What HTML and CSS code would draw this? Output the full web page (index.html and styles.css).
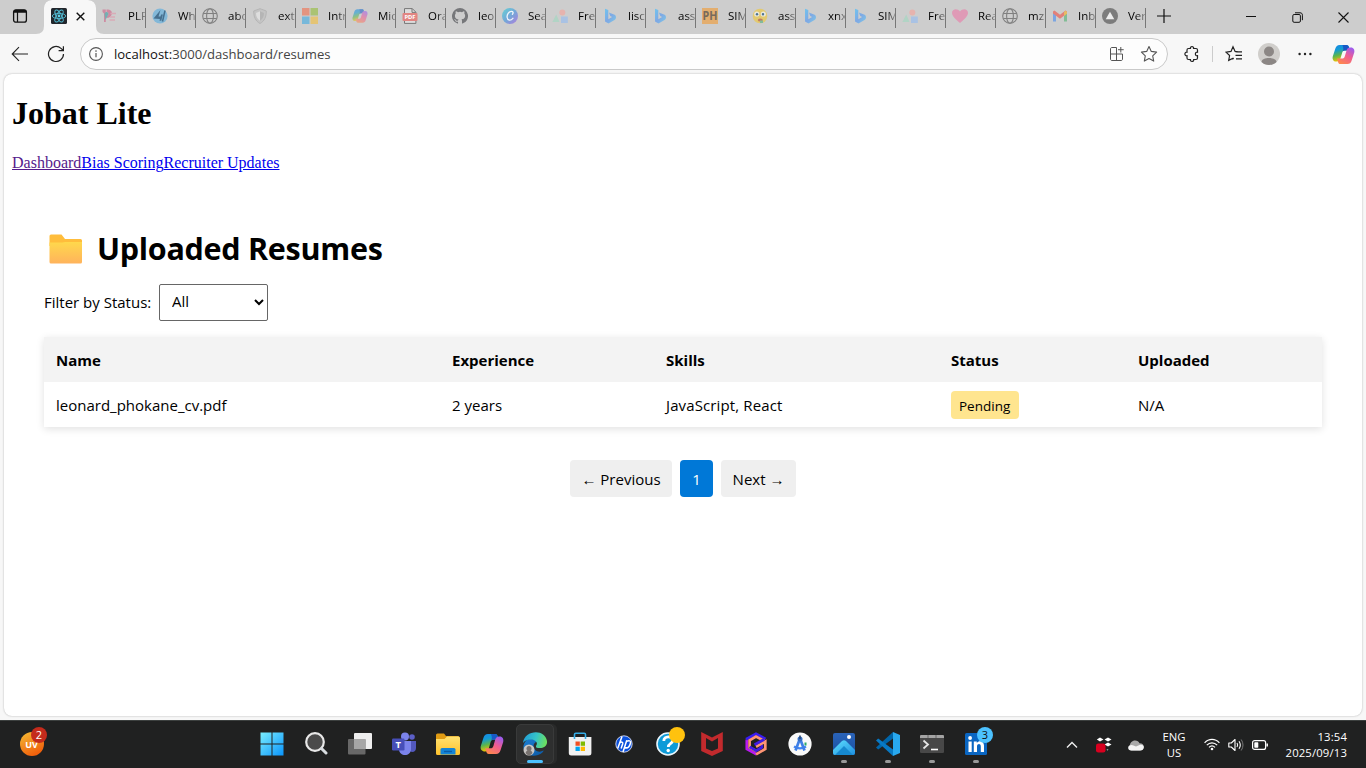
FILE: index.html
```html
<!DOCTYPE html>
<html lang="en">
<head>
<meta charset="utf-8">
<title>Jobat Lite</title>
<link rel="stylesheet" href="styles.css">
</head>
<body>
<svg class="sprite" aria-hidden="true">
  <defs>
    <linearGradient id="gBing" x1="0" y1="0" x2="1" y2="1"><stop offset="0" stop-color="#6fc4ee"/><stop offset=".5" stop-color="#7fa8e4"/><stop offset="1" stop-color="#7ccbe8"/></linearGradient>
    <linearGradient id="gCopA" x1="0" y1="0" x2=".3" y2="1"><stop offset="0" stop-color="#1785e8"/><stop offset=".35" stop-color="#139bd4"/><stop offset=".65" stop-color="#5bb54c"/><stop offset="1" stop-color="#f5c400"/></linearGradient>
    <linearGradient id="gCopB" x1=".8" y1="0" x2=".2" y2="1"><stop offset="0" stop-color="#9b5cf0"/><stop offset=".45" stop-color="#ef5c92"/><stop offset="1" stop-color="#ff8a4a"/></linearGradient>
    <linearGradient id="gCanva" x1="0" y1="0" x2="1" y2="1"><stop offset="0" stop-color="#65d1d4"/><stop offset=".5" stop-color="#73a8d8"/><stop offset="1" stop-color="#b07ddd"/></linearGradient>
    <linearGradient id="gFolder" x1="0" y1="0" x2="0" y2="1"><stop offset="0" stop-color="#ffd84c"/><stop offset="1" stop-color="#ffb35c"/></linearGradient>
    <linearGradient id="gWin" x1="0" y1="0" x2="1" y2="1"><stop offset="0" stop-color="#7aeeff"/><stop offset="1" stop-color="#0a94fb"/></linearGradient>
    <linearGradient id="gUv" x1="0" y1="0" x2=".5" y2="1"><stop offset="0" stop-color="#f4bd34"/><stop offset="1" stop-color="#f0600c"/></linearGradient>
    <linearGradient id="gExp" x1="0" y1="0" x2="0" y2="1"><stop offset="0" stop-color="#ffe272"/><stop offset="1" stop-color="#ffc22c"/></linearGradient>
    <linearGradient id="gEdge" x1="0" y1=".2" x2="1" y2=".4"><stop offset="0" stop-color="#209bd8"/><stop offset=".55" stop-color="#35c4c8"/><stop offset="1" stop-color="#6be060"/></linearGradient>
    <linearGradient id="gEdge2" x1="0" y1="0" x2="1" y2="1"><stop offset="0" stop-color="#1b7fd4"/><stop offset="1" stop-color="#0c59a4"/></linearGradient>
    <linearGradient id="gPhoto" x1="0" y1="0" x2="0" y2="1"><stop offset="0" stop-color="#2a63b8"/><stop offset="1" stop-color="#1a4fa0"/></linearGradient>
    <linearGradient id="gPhoto2" x1="0" y1="0" x2="1" y2="1"><stop offset="0" stop-color="#5fe0ff"/><stop offset="1" stop-color="#1e8fe0"/></linearGradient>
  </defs>
  <symbol id="bing" viewBox="0 0 16 16"><path d="M3 .8 6.300 2v9.200l3.800-2.100-1.900-1-1.300-3.500 5.100 1.900c1.700.7 2 1.600 2 2.800 0 1.400-.7 2.300-1.900 3L6.500 15.600 3 13.500z" fill="url(#gBing)"/></symbol>
  <symbol id="globe" viewBox="0 0 16 16"><g fill="none" stroke="#808080" stroke-width="1.100"><circle cx="8" cy="8" r="7.300"/><ellipse cx="8" cy="8" rx="3.400" ry="7.300"/><path d="M1.300 5.500h13.400M1.300 10.500h13.400"/></g></symbol>
  <symbol id="shapes" viewBox="0 0 16 16"><path d="M.3 14 4.300 6.500 7.500 14z" fill="#b1d4c5"/><circle cx="10.300" cy="4.500" r="3" fill="#e6b3ae"/><rect x="9" y="8.500" width="6.800" height="6.500" fill="#a9c2e4"/></symbol>
  <symbol id="copilot" viewBox="0 0 24 24"><path d="M8 2h7.200c1.300 0 2 .8 2.400 2l1.200 3.700h-5c-2 0-2.700.8-3.200 2.400l-1.700 5.900c-.7 2.200-1.600 3.400-4 3.400H4.200C1.500 19.400.1 16.900.8 14.100L3.400 6C4.200 3.300 5.500 2 8 2z" fill="url(#gCopA)"/><path d="M11 2h4.200c1.300 0 2 .8 2.400 2l1.200 3.700h-5c-1.300 0-2.100.3-2.600 1.100C12.500 6 11.500 4 11 2z" fill="#1759c6"/><path d="M16 22H8.800c-1.300 0-2-.8-2.400-2l-1.200-3.700h5c2 0 2.700-.8 3.200-2.400l1.700-5.900c.7-2.200 1.600-3.400 4-3.400h.7c2.700 0 4.100 2.500 3.400 5.300L20.600 18c-.8 2.700-2.100 4-4.600 4z" fill="url(#gCopB)"/></symbol>
  <symbol id="star" viewBox="0 0 18 18"><path d="m9 1.500 2.300 4.900 5.300.7-3.900 3.700 1 5.300L9 13.500l-4.700 2.600 1-5.300-3.900-3.700 5.300-.7z" fill="none" stroke="currentColor" stroke-width="1.100" stroke-linejoin="round"/></symbol>
</svg>

<div class="window">
  <header class="tabstrip">
    <div class="tab-actions"><svg width="16" height="16" viewBox="0 0 16 16"><rect x="1.600" y="1.800" width="12.800" height="12.400" rx="2.300" fill="none" stroke="#111" stroke-width="1.300"/><path d="M1.600 4.700V4c0-1.500.8-2.200 2.300-2.200h8.200c1.500 0 2.300.7 2.300 2.200v.7z" fill="#111"/><path d="M5.500 4v10" stroke="#111" stroke-width="1.200"/></svg></div>
    <div class="tab-active">
      <svg width="16" height="16" viewBox="0 0 16 16"><rect width="16" height="16" rx="1.500" fill="#22272d"/><g fill="none" stroke="#52bdd5" stroke-width=".9"><ellipse cx="8" cy="8" rx="6.700" ry="2.600"/><ellipse cx="8" cy="8" rx="6.700" ry="2.600" transform="rotate(60 8 8)"/><ellipse cx="8" cy="8" rx="6.700" ry="2.600" transform="rotate(120 8 8)"/></g><circle cx="8" cy="8" r="1.400" fill="#5ed0e8"/></svg>
      <svg width="9" height="9" viewBox="0 0 9 9"><path d="m.7.700 7.600 7.600M8.300.7.700 8.300" stroke="#111" stroke-width="1.400"/></svg>
    </div>
    <div class="tab"><svg viewBox="0 0 16 16"><path d="M.5 1.500h3.300v12.500H2V5.500L.5 4zM4.500 1.500c4.500 0 6 2 5.200 5-.8 2.500-2.700 3.500-5.200 3.500V8c2.500-.5 2.500-4 0-4z" fill="#cf8ca2"/><path d="M2.500 6c1-3 4-2 4 0L3.500 12z" fill="#76aeb1"/><path d="M8.500 5.500H14M8 9h5M7.500 12H13" stroke="#d9abb7" stroke-width="1.300"/></svg><span>PLF</span></div>
    <div class="tab"><svg viewBox="0 0 16 16"><circle cx="8" cy="8" r="7.600" fill="#83b8d8"/><path d="M1.500 10.500 8.500 2 6.500 8.500h2l.6-2h1.800l-1.600 6.300H7.500l.4-1.700z" fill="#47708f"/><path d="M13 2.500 10.500 13.500" stroke="#47708f" stroke-width="1.500"/></svg><span>Wh</span></div>
    <div class="tab"><svg><use href="#globe"/></svg><span>abo</span></div>
    <div class="tab"><svg viewBox="0 0 16 16"><path d="M8 .7 14.300 3c0 6-1.800 10-6.300 12.500C3.500 13 1.700 9 1.700 3z" fill="#c4c4c4" stroke="#b5b5b5"/><path d="M8 3.300 12 5c0 3.600-1.300 6-4 7.700z" fill="#b5b5b5"/><path d="M8 3.300 4 5c0 3.600 1.300 6 4 7.700z" fill="#dedede"/></svg><span>ext</span></div>
    <div class="tab"><svg viewBox="0 0 16 16"><path d="M0 0h7.500v7.500H0z" fill="#e39480"/><path d="M8.500 0H16v7.500H8.500z" fill="#aac373"/><path d="M0 8.500h7.500V16H0z" fill="#77b8da"/><path d="M8.500 8.500H16V16H8.500z" fill="#e4c475"/></svg><span>Intr</span></div>
    <div class="tab"><svg class="faded" viewBox="0 0 24 24"><use href="#copilot"/></svg><span>Mic</span></div>
    <div class="tab"><svg viewBox="0 0 16 16"><path d="M2.500.6h7.800l3.600 3.600v11.200H2.500z" fill="#ddd" stroke="#777"/><path d="M10 .6v3.800h3.800" fill="none" stroke="#777"/><rect x=".5" y="5" width="15" height="8" rx="1" fill="#e28582"/><text x="8" y="11.200" font-size="5.800" font-weight="700" fill="#fff" text-anchor="middle">PDF</text></svg><span>Ora</span></div>
    <div class="tab"><svg viewBox="0 0 16 16"><path fill="#76777a" d="M8 0a8 8 0 0 0-2.530 15.590c.4.070.55-.17.550-.38v-1.490c-2.230.490-2.700-.94-2.700-.94-.36-.92-.89-1.170-.89-1.170-.73-.5.060-.49.060-.49.800.060 1.230.830 1.230.830.710 1.220 1.870.870 2.330.660.070-.52.280-.87.510-1.070-1.780-.2-3.640-.89-3.640-3.950 0-.87.310-1.590.820-2.150-.08-.2-.36-1.020.080-2.120 0 0 .670-.210 2.200.820a7.600 7.600 0 0 1 4 0c1.530-1.040 2.200-.820 2.200-.820.440 1.100.160 1.920.080 2.120.510.560.820 1.270.820 2.150 0 3.070-1.870 3.750-3.650 3.950.290.250.540.730.540 1.480v2.190c0 .210.150.460.550.380A8 8 0 0 0 8 0z"/></svg><span>leo</span></div>
    <div class="tab"><svg viewBox="0 0 16 16"><circle cx="8" cy="8" r="8" fill="url(#gCanva)"/><path d="M10.400 6.200c1.200-1.200.8-3-1.100-2.900-2.500.2-4.500 3.300-4.200 6 .3 3.300 3.500 3.900 5.800 1" fill="none" stroke="#f0f5fb" stroke-width="1.300" stroke-linecap="round"/></svg><span>Sea</span></div>
    <div class="tab"><svg><use href="#shapes"/></svg><span>Fre</span></div>
    <div class="tab"><svg><use href="#bing"/></svg><span>lisc</span></div>
    <div class="tab"><svg><use href="#bing"/></svg><span>ass</span></div>
    <div class="tab"><svg viewBox="0 0 16 16"><rect width="16" height="16" fill="#e3ae6f"/><text x="8" y="12.300" font-size="11.500" font-weight="700" fill="#776a5c" text-anchor="middle" textLength="15" lengthAdjust="spacingAndGlyphs">PH</text></svg><span>SIM</span></div>
    <div class="tab"><svg viewBox="0 0 16 16"><circle cx="8" cy="8" r="7.300" fill="#e3ca70"/><circle cx="4.800" cy="6" r="2.600" fill="#e8e8df"/><circle cx="11.300" cy="6" r="2.600" fill="#e8e8df"/><circle cx="5" cy="6.300" r="1.200" fill="#4d7391"/><circle cx="11" cy="6.300" r="1.200" fill="#4d7391"/><ellipse cx="8.300" cy="12" rx="2.500" ry="1.500" fill="#bd7c62"/><path d="M8 12.500h3V15H8z" fill="#83bb9b"/></svg><span>ass</span></div>
    <div class="tab"><svg><use href="#bing"/></svg><span>xnx</span></div>
    <div class="tab"><svg><use href="#bing"/></svg><span>SIM</span></div>
    <div class="tab"><svg><use href="#shapes"/></svg><span>Fre</span></div>
    <div class="tab"><svg viewBox="0 0 16 16"><path d="M8 15C3 10.800 0 8 0 4.800 0 .8 5.500-.2 8 3.500 10.500-.2 16 .8 16 4.800 16 8 13 10.800 8 15z" fill="#df9ab6"/></svg><span>Rea</span></div>
    <div class="tab"><svg><use href="#globe"/></svg><span>mz</span></div>
    <div class="tab"><svg viewBox="0 0 16 16"><path d="M1 4v9.500h3V6z" fill="#7ba5e2"/><path d="M15 4v9.500h-3V6z" fill="#82bd96"/><path d="M1 3.500 2.500 2.500 8 6.700l5.500-4.200L15 3.500v2L8 10.800 1 5.500z" fill="#e28079"/><path d="M12 4.200 13.500 2.500 15 4v1.700l-3 2.200z" fill="#e6bd62"/></svg><span>Inb</span></div>
    <div class="tab"><svg viewBox="0 0 16 16"><circle cx="8" cy="8" r="8" fill="#7c7c7c"/><path d="m8 3.800 4.300 7.400H3.700z" fill="#ececec"/></svg><span>Ver</span></div>
    <div class="new-tab"><svg width="14" height="14" viewBox="0 0 14 14"><path d="M7 0v14M0 7h14" stroke="#111" stroke-width="1.200"/></svg></div>
    <div class="window-controls">
      <div><svg width="10" height="10" viewBox="0 0 10 10"><path d="M0 4.500h10" stroke="#111"/></svg></div>
      <div><svg width="11" height="11" viewBox="0 0 11 11"><g fill="none" stroke="#111"><rect x=".8" y="2.500" width="7.600" height="7.800" rx="1.300"/><path d="M3 .8h5c1.600 0 2.400.8 2.400 2.400v5"/></g></svg></div>
      <div><svg width="11" height="11" viewBox="0 0 11 11"><path d="m.5.500 10 10M10.500.5.500 10.500" stroke="#111" stroke-width="1.100"/></svg></div>
    </div>
  </header>

  <div class="toolbar">
    <div class="nav-icon"><svg width="18" height="16" viewBox="0 0 18 16"><path d="M17 8H1.500M8 1.200 1.200 8 8 14.800" fill="none" stroke="#222" stroke-width="1.100"/></svg></div>
    <div class="nav-icon"><svg width="18" height="18" viewBox="0 0 18 18"><path d="M16.500 9A7.500 7.500 0 1 1 14 3.400l2.200 2M16.400 1.200v4.500h-4.800" fill="none" stroke="#222" stroke-width="1.200"/></svg></div>
    <div class="address">
      <svg width="14" height="14" viewBox="0 0 14 14"><circle cx="7" cy="7" r="6.400" fill="none" stroke="#555" stroke-width="1.100"/><path d="M7 6v4.200" stroke="#555" stroke-width="1.200"/><circle cx="7" cy="4.100" r=".8" fill="#555"/></svg>
      <span class="url"><b>localhost:</b>3000/dashboard/resumes</span>
      <svg class="apps" width="14" height="14" viewBox="0 0 14 14"><path d="M6.500.5H2C1 .5.500 1 .500 2v10c0 1 .5 1.500 1.500 1.500h9c1 0 1.500-.5 1.500-1.500V7M.5 7h12M6.500.5v13M10.800 0v5.500M8 2.700h5.700" fill="none" stroke="#555"/></svg>
      <svg class="fav" width="18" height="18"><use href="#star"/></svg>
    </div>
    <div class="tools">
      <svg class="extensions" width="16" height="16" viewBox="0 0 16 16"><path d="M4.500 2.500h1.900C6 1.200 7 .6 8 .6s2 .7 1.600 1.900H12c1 0 1.500.5 1.500 1.500v2.200c-1.600-.3-2.100.8-2.100 1.800s.6 2 2.100 1.700V12c0 1-.5 1.500-1.500 1.500H9.700c.3 1.300-.7 1.900-1.700 1.900s-2-.6-1.600-1.900H4.500c-1 0-1.500-.5-1.500-1.500V9.700C1.700 10 .9 9 .9 8s.8-2 2.100-1.800V4c0-1 .5-1.500 1.500-1.500z" fill="none" stroke="#222" stroke-width="1.200"/></svg>
      <i class="divider"></i>
      <svg class="favorites" width="18" height="18" viewBox="0 0 18 18"><path d="M8.600 14 8 13.300l-4.300 2.100.9-4.900L1 7.100l5-.7 2-4.700 2.100 4.700 2.400.3M10.500 6.800H17M10.500 10.300H17M11 13.800h6" fill="none" stroke="#222" stroke-width="1.200"/></svg>
      <svg class="avatar" width="22" height="22" viewBox="0 0 22 22"><circle cx="11" cy="11" r="11" fill="#d0cecb"/><circle cx="11" cy="8.500" r="5" fill="#8c8785"/><path d="M3.500 19c0-5.500 15-5.500 15 0-4 4-11 4-15 0z" fill="#8c8785"/></svg>
      <svg class="more" width="14" height="4" viewBox="0 0 14 4"><g fill="#222"><circle cx="1.600" cy="2" r="1.200"/><circle cx="7" cy="2" r="1.200"/><circle cx="12.400" cy="2" r="1.200"/></g></svg>
      <svg class="copilot" width="23" height="23"><use href="#copilot"/></svg>
    </div>
  </div>

  <main class="page">
    <h1 class="brand">Jobat Lite</h1>
    <nav class="links"><a class="visited" href="#">Dashboard</a><a href="#">Bias Scoring</a><a href="#">Recruiter Updates</a></nav>
    <section class="resumes">
      <h2 class="title"><svg width="34" height="30" viewBox="0 0 34 30"><path d="M.5 2Q.5.500 2 .500h10.500L16 5h15.500q1.500 0 1.500 1.500V12H.5z" fill="#ffbd3c"/><path d="M.5 8.500h13L16 8h17v20q0 1.500-1.500 1.500H2Q.5 29.500.500 28z" fill="url(#gFolder)"/></svg><span>Uploaded Resumes</span></h2>
      <div class="filter"><label for="status">Filter by Status:</label><select id="status"><option>All</option><option>Pending</option></select></div>
      <table class="table">
        <colgroup><col class="c-name"><col class="c-exp"><col class="c-skills"><col class="c-status"><col></colgroup>
        <thead><tr><th>Name</th><th>Experience</th><th>Skills</th><th>Status</th><th>Uploaded</th></tr></thead>
        <tbody><tr><td>leonard_phokane_cv.pdf</td><td>2 years</td><td class="skills">JavaScript, React</td><td><span class="badge">Pending</span></td><td>N/A</td></tr></tbody>
      </table>
      <div class="pager"><button class="prev">← Previous</button><button class="current">1</button><button class="next">Next →</button></div>
    </section>
  </main>
</div>

<footer class="taskbar">
  <div class="widget"><svg width="28" height="30" viewBox="0 0 28 30"><circle cx="12" cy="17" r="12" fill="url(#gUv)"/><text x="11.500" y="20.500" font-size="9" font-weight="700" fill="#fff" text-anchor="middle">UV</text><circle cx="19" cy="8" r="8" fill="#c42b1c"/><text x="19" y="12" font-size="11" fill="#fff" text-anchor="middle">2</text></svg></div>
  <div class="apps-row">
    <div class="app"><svg viewBox="0 0 24 24"><path d="M.5.5H11.500v11H.5zM12.500.5h11v11h-11zM.5 12.500h11v11H.5zM12.500 12.500h11v11h-11z" fill="url(#gWin)"/></svg></div>
    <div class="app"><svg viewBox="0 0 24 24"><circle cx="11" cy="10" r="8.800" fill="#4a4a4a" stroke="#e8e8e8" stroke-width="2.200"/><path d="m17.500 16.500 4.500 4.500" stroke="#d8dce0" stroke-width="3" stroke-linecap="round"/></svg></div>
    <div class="app"><svg viewBox="0 0 24 24"><rect x="6" y="1" width="18" height="16" rx="1" fill="#eee"/><rect x="0" y="7" width="17.500" height="15.500" rx="1" fill="#686868"/><path d="M6 7h11.500v10H6z" fill="#a6a6a6"/></svg></div>
    <div class="app"><svg viewBox="0 0 24 24"><circle cx="20" cy="5" r="2.800" fill="#5b5fc7"/><path d="M16 9h8v7c0 4-4 5-6 3z" fill="#5258bd"/><circle cx="13" cy="4.500" r="4" fill="#7b83eb"/><path d="M7 9h12v8c0 8-12 8-12 0z" fill="#7b83eb"/><rect x="0" y="6.500" width="12.500" height="12" rx="1.200" fill="#464eb8"/><text x="6.200" y="16" font-size="9.500" font-weight="700" fill="#fff" text-anchor="middle">T</text></svg></div>
    <div class="app"><svg viewBox="0 0 24 24"><path d="M0 3q0-1.500 1.500-1.500H8L10 4h12q1.500 0 1.500 1.500V12H0z" fill="#e09b13"/><path d="M0 7h8.500L11 4.500h11.500Q24 4.500 24 6v15.500q0 1.500-1.500 1.500h-21Q0 23 0 21.500z" fill="url(#gExp)"/><path d="M4.500 22.500v-5q0-1.500 1.500-1.500h12q1.500 0 1.500 1.500v5z" fill="#1384d6"/><path d="M8 19.500h8" stroke="#0a5ca8" stroke-width="1.400"/></svg></div>
    <div class="app"><svg><use href="#copilot"/></svg></div>
    <div class="app active"><svg viewBox="0 0 24 24"><path d="M1 12c-3 8 6 14 14 11 4-1.500 6-4 5.500-4.500-5 3-10-.5-10-4 0-3 1.500-4 3.500-5C9 5 2.500 7 1 12z" fill="url(#gEdge2)"/><path d="M0 11C1-2 22-4 24 9c.5 5-3 7-7 7-4.500 0-4.500-1.500-3.500-3 1.500-3-1.500-5.500-6-5.500C4 7.500 1.500 9 0 11z" fill="url(#gEdge)"/><circle cx="6" cy="18" r="5.500" fill="#c9c7c5"/><circle cx="6" cy="16.500" r="2.500" fill="#77716e"/><path d="M2.500 21c1-4 6-4 7 0-2 3-5 3-7 0z" fill="#77716e"/></svg><i class="mark"></i></div>
    <div class="app"><svg viewBox="0 0 24 24"><path d="M.8 5h22.600v16q0 2.500-2.500 2.500H3.300Q.8 23.500.8 21z" fill="#f1f1f1"/><path d="M6.500 7V2.500q0-1.300 1.300-1.300h8.400q1.300 0 1.300 1.300V7" fill="none" stroke="#36aee8" stroke-width="1.600"/><path d="M7.500 9.500h4.300v4.300H7.500z" fill="#f25022"/><path d="M12.700 9.500H17v4.300h-4.300z" fill="#7fba00"/><path d="M7.500 14.700h4.300V19H7.500z" fill="#00a4ef"/><path d="M12.700 14.700H17V19h-4.300z" fill="#ffb900"/></svg></div>
    <div class="app"><svg viewBox="0 0 24 24"><circle cx="12" cy="12" r="8.200" fill="#0a50dc" stroke="#eef" stroke-width=".8"/><path d="m10 4.500-4.300 12M7.700 11c2-1.500 3.500-1 3 .8l-1.600 4.700M14.800 8.200 11 20M14.500 9.200c3.500-1.200 4.600-.2 3.800 2.500-1 3.500-2.300 4.800-5.300 4" fill="none" stroke="#fff" stroke-width="1.500"/></svg></div>
    <div class="app"><svg viewBox="0 0 24 24"><circle cx="12" cy="12" r="11" fill="#0e9bd8" stroke="#e9f5fb" stroke-width="1.600"/><path d="M7.800 9c0-5.500 8.800-5.500 8.800-.6 0 3.300-4.300 3.200-4.300 6.500" fill="none" stroke="#fff" stroke-width="2.800"/><circle cx="12.200" cy="18.500" r="1.700" fill="#fff"/></svg><i class="yellow-dot"></i></div>
    <div class="app"><svg viewBox="0 0 24 24"><path d="M1.200 0 12 5.500 22.800 0v19L12 24 1.200 19zM6 6v10.500l6 2.500 6-2.500V6l-6 3.500z" fill="#c22a2d" fill-rule="evenodd"/></svg></div>
    <div class="app"><svg viewBox="0 0 24 24"><g fill="none" stroke-width="2.700"><path d="M2.800 7.500V17l9.700 5.300" stroke="#ba19f0"/><path d="M2 7.300 12 1.700l9.500 5.200" stroke="#3a1cf0"/><path d="M20 8.800 12 4.600 5.600 8.200v7.300l6.700 3.600" stroke="#ff9575"/><path d="M5.600 14.800l6.600 3.800 5.600-3.200v-3" stroke="#421be5"/><path d="M12 22.300 21.300 17v-7.500L12 14.700" stroke="#ff9575"/><path d="m10.500 12.700 9.500-5.200" stroke="#421be5"/></g></svg></div>
    <div class="app"><svg viewBox="0 0 24 24"><circle cx="12" cy="12" r="11.600" fill="#fafafa"/><path d="M6 14.500c4 2.500 8 2.500 12 0" fill="none" stroke="#4285f4" stroke-width="2.300"/><path d="M12 6.500 7.500 18.500M12 6.500l4.500 12" stroke="#3f7fe5" stroke-width="2.700"/><path d="M16.500 10.500h2v3h-2z" fill="#2ba96a"/><circle cx="12" cy="7" r="2.500" fill="#356fc4"/><path d="M12 3.500V7" stroke="#274572" stroke-width="1.600"/></svg></div>
    <div class="app"><svg viewBox="0 0 24 24"><rect x="1" y="1" width="22" height="22" rx="2" fill="url(#gPhoto)"/><path d="M1 18 10 9q2-1.500 4 0l9 9v3q0 2-2 2H3q-2 0-2-2z" fill="url(#gPhoto2)"/><path d="m3 23 9-9 9 9z" fill="#1689cf"/><circle cx="17" cy="5" r="2" fill="#fff"/></svg><i class="dot"></i></div>
    <div class="app"><svg viewBox="0 0 24 24"><path d="M17 0v6.500L2.200 17.500 0 15.500z" fill="#0065a9"/><path d="M17 24v-6.500L2.200 6.500 0 8.500z" fill="#0879c4"/><path d="m17 0 7 3v18l-7 3z" fill="#28a8ee"/></svg><i class="dot"></i></div>
    <div class="app"><svg viewBox="0 0 24 24"><rect x="0" y="3" width="24" height="18" rx="1.300" fill="#484848"/><path d="M0 6V4.300Q0 3 1.300 3h21.400Q24 3 24 4.300V6z" fill="#a4a4a4"/><path d="M8 3v3m8-3v3" stroke="#666"/><path d="m3.500 8.500 4.500 4-4.500 4" fill="none" stroke="#e5e5e5" stroke-width="1.800"/><path d="M11 17.500h7" stroke="#fff" stroke-width="1.600"/></svg><i class="dot"></i></div>
    <div class="app"><svg viewBox="0 0 24 24"><rect x="1" y="1" width="22" height="22" rx="1.500" fill="#0a66c2"/><path d="M4.500 9.500h3.200V20H4.500zM9.800 9.500h3V11c1.800-3 7.200-2.500 7.200 2.600V20h-3.200v-5.500c0-3.400-3.800-3-3.800 0V20H9.800z" fill="#fff"/><circle cx="6.100" cy="6" r="1.900" fill="#fff"/></svg><i class="count">3</i><i class="dot"></i></div>
  </div>
  <div class="tray">
    <svg class="chev" width="12" height="8" viewBox="0 0 12 8"><path d="m1 6.500 5-5 5 5" fill="none" stroke="#eee" stroke-width="1.400"/></svg>
    <svg class="drop" width="16" height="16" viewBox="0 0 16 16"><path d="m4 .5 3.500 2L4 4.500.800 2.500zM12 .5l3.500 2-3.500 2-3.500-2zM12 5.500l3.500 2-3.500 2-3.500-2z" fill="#fff"/><rect x="0" y="6.500" width="9.500" height="9" rx="2.300" fill="#d8001f"/><path d="M10.500 12.500h2l-1 1z" fill="#fff"/></svg>
    <svg class="cloud" width="16" height="12" viewBox="0 0 16 12"><path d="M2 8.500C1 4 4.500 1.500 7 1.500s3.500 1 4.500 2.700c3 0 4.300 1.600 4.300 3.600 0 2.300-1.500 3.700-3.800 3.700H3.500C1.500 11.500.300 10.500.300 9.200Q.3 7 2 6z" fill="#a9a9a9"/><path d="M.3 8.500c0-2 3-3.300 5.200-2l2.500 1 3.500-1.600c2.500-.8 4.300.3 4.300 2.300s-1.600 3.300-3.800 3.300H3.500c-2 0-3.200-1-3.200-3z" fill="#f4f4f4"/></svg>
    <div class="lang">ENG<br>US</div>
    <svg class="wifi" width="16" height="13" viewBox="0 0 16 13"><g fill="none" stroke="#fff" stroke-width="1.200"><path d="M.6 4.800c4.200-4.600 10.600-4.600 14.800 0M2.800 7.200c3-3.200 7.400-3.200 10.400 0M5 9.400c1.800-1.800 4.200-1.800 6 0"/></g><circle cx="8" cy="11" r="1.300" fill="#fff"/></svg>
    <svg class="volume" width="16" height="14" viewBox="0 0 16 14"><path d="M.8 5h2.500L7 1.500v11L3.300 9H.8z" fill="none" stroke="#fff" stroke-width="1.100" stroke-linejoin="round"/><path d="M9 5q1.300 2 0 4M11 3.200q2.600 3.800 0 7.600" fill="none" stroke="#fff" stroke-width="1.100"/><path d="M13.200 1.500q3.600 5.500 0 11" fill="none" stroke="#777"/></svg>
    <svg class="battery" width="16" height="10" viewBox="0 0 16 10"><rect x=".6" y=".6" width="13" height="8.800" rx="2" fill="none" stroke="#fff" stroke-width="1.200"/><rect x="2.300" y="2.300" width="4" height="5.400" rx=".7" fill="#fff"/><path d="M15.200 3.500v3" stroke="#fff" stroke-width="1.500"/></svg>
    <div class="clock">13:54<br>2025/09/13</div>
  </div>
</footer>
</body>
</html>
```
FILE: styles.css
```css
* { box-sizing: border-box; }
body {
  margin: 0;
  width: 1366px;
  height: 768px;
  overflow: hidden;
  display: flex;
  flex-direction: column;
  background: #f7f7f7;
  font-family: "Open Sans", "Noto Sans", sans-serif;
  color: #000;
}
svg { display: block; flex: none; }
.sprite { position: absolute; width: 0; height: 0; }
.window { height: 720px; display: flex; flex-direction: column; }

/* Tab strip */
.tabstrip { height: 34px; display: flex; background: #cdcdcd; }
.tab-actions { width: 44px; padding: 8px 0 0 12px; }
.tab-active {
  width: 52px;
  display: flex;
  padding: 8px 0 0 7px;
  gap: 9px;
  background: #f7f7f7;
  border-radius: 8px 8px 0 0;
  box-shadow: -8px 8px 0 #f7f7f7, 8px 8px 0 #f7f7f7;
  clip-path: path("M-8 34Q0 34 0 26V8Q0 0 8 0H44Q52 0 52 8V26Q52 34 60 34Z");
}
.tab-active svg:last-child { margin-top: 4px; }
.tab { width: 50px; height: 34px; display: flex; padding: 8px 0 0 6px; }
.tab svg { width: 16px; height: 16px; }
.tab span {
  width: 17px;
  margin-left: 10px;
  overflow: hidden;
  white-space: nowrap;
  font-size: 11.500px;
  line-height: 16px;
  mask-image: linear-gradient(90deg, #000 45%, rgba(0, 0, 0, .3));
}
.tab::after { content: ""; width: 1px; height: 20px; background: #777; }
.faded { opacity: .55; }
.new-tab { padding: 9px 0 0 11px; }
.window-controls { margin-left: auto; display: flex; }
.window-controls div { width: 46px; display: flex; align-items: center; justify-content: center; }

/* Toolbar */
.toolbar { height: 40px; display: flex; align-items: center; padding: 0 11px 0 2px; }
.nav-icon { width: 36px; display: flex; justify-content: center; }
.address {
  width: 1089px;
  height: 32px;
  margin-left: 6px;
  padding: 0 9px 0 8px;
  display: flex;
  align-items: center;
  background: #fdfdfd;
  border: 1px solid #c9c9c9;
  border-radius: 16px;
}
.url { flex: 1; margin-left: 11px; font-size: 13.100px; color: #444; }
.url b { font-weight: 400; color: #111; }
.apps { margin-right: 16px; }
.fav { color: #555; }
.tools { flex: 1; display: flex; align-items: center; margin-left: 16px; }
.divider { width: 1px; height: 16px; margin-left: 12px; background: #ccc; }
.favorites { margin-left: 12px; }
.avatar { margin-left: 15px; }
.more { margin-left: 18px; }
.copilot { margin-left: 20px; }

/* Page */
.page {
  width: 1358px;
  height: 642px;
  margin-left: 4px;
  padding: 0 8px;
  display: flow-root;
  background: #fff;
  border-radius: 8px;
  box-shadow: 0 0 2px rgba(0, 0, 0, .3);
}
.brand { margin: 21px 0 22px; font: 700 32px/37px "Liberation Serif", serif; }
.links { font: 16px/18px "Liberation Serif", serif; }
.links a { color: #0000ee; text-decoration: underline; }
.links .visited { color: #551a8b; }
.resumes { padding: 54px 32px 0; }
.title { display: flex; align-items: center; height: 43px; margin: 0; padding-left: 5px; font-size: 30.500px; font-weight: 700; letter-spacing: -.28px; }
.title span { margin-left: 14px; white-space: nowrap; }
.title svg { margin-top: 3px; }
.filter { height: 37px; margin-top: 15px; display: flex; align-items: center; font-size: 15px; }
.filter label { width: 115px; padding-bottom: 2px; white-space: nowrap; }
.filter select {
  width: 109px;
  height: 37px;
  padding: 5px 8px 8px;
  border: 1px solid #666;
  border-radius: 2px;
  background: #fff;
  color: #000;
  font: 15px "Open Sans", sans-serif;
}
.table {
  width: 1278px;
  margin-top: 16px;
  table-layout: fixed;
  border-collapse: collapse;
  font-size: 15px;
  box-shadow: 0 2px 8px rgba(0, 0, 0, .12);
}
.c-name { width: 396px; }
.c-exp { width: 214px; }
.c-skills { width: 285px; }
.c-status { width: 187px; }
.table th, .table td { height: 45px; padding: 2px 12px 0; text-align: left; line-height: 21px; }
.table th { background: #f3f3f3; }
.skills { letter-spacing: .12px; }
.badge { display: block; width: 68px; height: 28px; margin-bottom: 1px; padding: 4px 8px; border-radius: 4px; background: #ffe58f; font-size: 13.500px; line-height: 22px; }
.pager { display: flex; justify-content: center; gap: 8px; margin-top: 33px; }
.pager button {
  height: 37px;
  padding: 0;
  border: 0;
  border-radius: 4px;
  background: #efefef;
  font: 15px "Open Sans", sans-serif;
  color: #000;
}
.pager .prev { width: 102px; }
.pager .next { width: 75px; }
.pager .current { width: 33px; background: #0078d7; color: #fff; }

/* Taskbar */
.taskbar { height: 48px; display: flex; background: #202121; border-top: 1px solid #3c403f; color: #fff; }
.widget { width: 250px; padding: 6px 0 0 20px; }
.apps-row { display: flex; }
.app { width: 44px; height: 46px; display: flex; align-items: center; justify-content: center; position: relative; }
.app svg { width: 24px; height: 24px; }
.app.active { background: #2e2f2f; border-radius: 5px; margin: 3px 4px 3px 2px; width: 38px; height: 40px; border: 1px solid #393a3a; box-shadow: 3px 0 0 #292a2a; }
.mark { position: absolute; bottom: 0; width: 16px; height: 3px; border-radius: 2px; background: #4cc2ff; }
.dot { position: absolute; bottom: 4px; width: 6px; height: 3px; border-radius: 2px; background: #999; }
.yellow-dot { position: absolute; left: 23px; top: 6px; width: 16px; height: 16px; border-radius: 50%; background: #ffc20e; }
.count {
  position: absolute;
  left: 23px;
  top: 6px;
  width: 16px;
  height: 16px;
  border-radius: 50%;
  background: #4cc2ff;
  color: #111;
  font: 11px/16px "Open Sans", sans-serif;
  text-align: center;
}
.tray { flex: 1; display: flex; align-items: center; padding-left: 68px; }
.drop { margin-left: 18px; }
.cloud { margin-left: 16px; }
.lang { width: 40px; margin-left: 10px; text-align: center; }
.lang, .clock { font-size: 11.300px; line-height: 16px; }
.wifi { margin-left: 10px; }
.volume { margin-left: 8px; }
.battery { margin-left: 8px; }
.clock { flex: 1; padding-right: 19px; text-align: right; letter-spacing: .15px; }
```
